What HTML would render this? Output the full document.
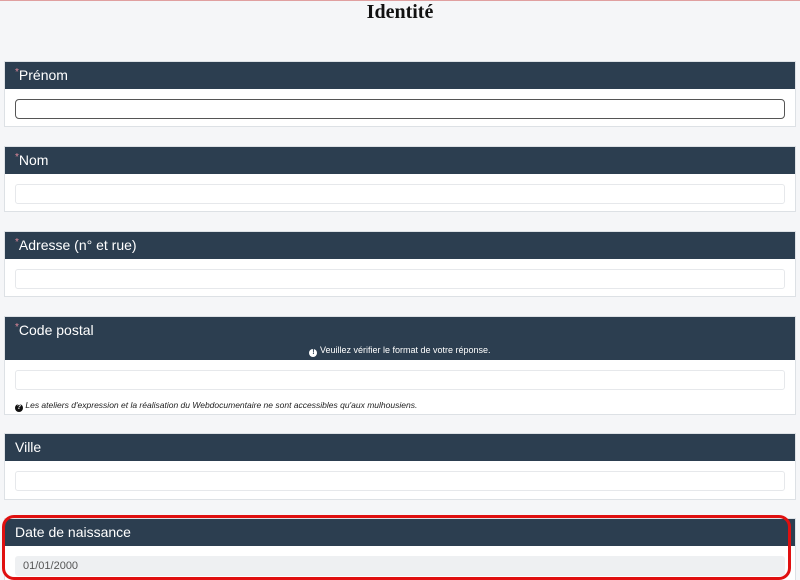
<!DOCTYPE html>
<html style="overflow:hidden"><head><meta charset="utf-8"><style>
body{margin:0;width:800px;height:580px;background:#f5f6f8;font-family:"Liberation Sans",sans-serif;position:relative;overflow:hidden;border-top:1px solid #e0a0a0;box-sizing:border-box}
h1{position:absolute;top:0;left:0;width:800px;text-align:center;margin:0;font:bold 20px "Liberation Serif",serif;line-height:22px;color:#111}
.card{position:absolute;left:4px;width:792px;background:#fff;border:1px solid #dde1e5;box-sizing:border-box}
.hd{background:#2c3e50;color:#fff;font-size:14px;padding:0 10px;position:relative}
.hd .t{height:27px;line-height:27px;overflow:hidden}
.hd .s{color:#e08a9a;font-size:10px;position:relative;top:-5px;line-height:0}
.inp{position:absolute;left:10px;right:10px;height:18px;border:1px solid #e6e8eb;border-radius:3px;background:#fff}
.msg{font-size:9px;text-align:center;height:16px;line-height:12px}
.help{position:absolute;left:10px;font-size:8.5px;font-style:italic;color:#222}
.ic{display:inline-block;width:8px;height:8px;border-radius:50%;background:#111;color:#fff;font-size:7px;line-height:8px;text-align:center;font-style:normal;font-weight:bold;vertical-align:-1px}
.hd .ic{background:#fff;color:#2c3e50}
</style></head><body>
<h1>Identité</h1>
<div class="card" style="top:60px;height:66px"><div class="hd"><div class="t"><span class="s">*</span>Prénom</div></div><div class="inp" style="top:37px;border-color:#555;border-radius:4px"></div></div>
<div class="card" style="top:145px;height:66px"><div class="hd"><div class="t"><span class="s">*</span>Nom</div></div><div class="inp" style="top:37px"></div></div>
<div class="card" style="top:230px;height:66px"><div class="hd"><div class="t"><span class="s">*</span>Adresse (n° et rue)</div></div><div class="inp" style="top:37px"></div></div>
<div class="card" style="top:315px;height:99px"><div class="hd"><div class="t"><span class="s">*</span>Code postal</div><div class="msg"><span class="ic">!</span> Veuillez vérifier le format de votre réponse.</div></div><div class="inp" style="top:53px"></div><div class="help" style="top:83px"><span class="ic">?</span> Les ateliers d'expression et la réalisation du Webdocumentaire ne sont accessibles qu'aux mulhousiens.</div></div>
<div class="card" style="top:432px;height:67px"><div class="hd"><div class="t">Ville</div></div><div class="inp" style="top:37px"></div></div>
<div class="card" style="top:517px;height:70px"><div class="hd"><div class="t">Date de naissance</div></div><div class="inp" style="top:37px;background:#eef0f2;border-color:#eef0f2;font-size:11px;color:#555;line-height:18px;padding-left:7px">01/01/2000</div></div>
<div style="position:absolute;left:2px;top:514px;width:783px;height:59px;border:3px solid #e01010;border-radius:12px"></div>
</body></html>
